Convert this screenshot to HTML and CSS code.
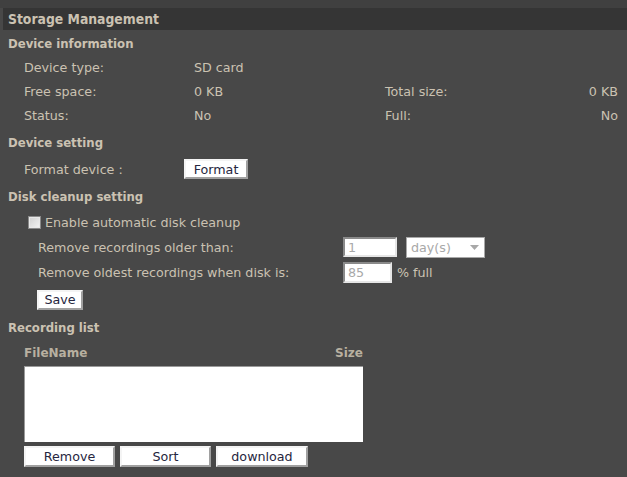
FILE: index.html
```html
<!DOCTYPE html>
<html>
<head>
<meta charset="utf-8">
<link rel="stylesheet" href="styles.css">
</head>
<body>
<div class="strip"></div>
<div class="titlebar">Storage Management</div>

<div class="heading h-first">Device information</div>
<div class="info">
  <div class="info-row">
    <span class="lbl">Device type:</span><span class="val">SD card</span><span></span><span></span>
  </div>
  <div class="info-row">
    <span class="lbl">Free space:</span><span class="val">0 KB</span><span class="lbl2">Total size:</span><span class="val2">0 KB</span>
  </div>
  <div class="info-row">
    <span class="lbl">Status:</span><span class="val">No</span><span class="lbl2">Full:</span><span class="val2">No</span>
  </div>
</div>

<div class="heading h-setting">Device setting</div>
<div class="format-row">
  <span class="lbl">Format device :</span>
  <button class="btn btn-format">Format</button>
</div>

<div class="heading">Disk cleanup setting</div>
<div class="check-row">
  <span class="checkbox"></span><span>Enable automatic disk cleanup</span>
</div>
<div class="clean-row r-older">
  <span class="clean-lbl">Remove recordings older than:</span>
  <div class="ctrls">
    <span class="txt txt-days">1</span>
    <span class="select">day(s)<svg class="arrow" width="9" height="5" viewBox="0 0 9 5"><path d="M0 0H9L4.5 5Z" fill="#a8a8a8"/></svg></span>
  </div>
</div>
<div class="clean-row r-oldest">
  <span class="clean-lbl">Remove oldest recordings when disk is:</span>
  <div class="ctrls">
    <span class="txt txt-pct">85</span>
    <span class="pct">% full</span>
  </div>
</div>
<div class="save-row">
  <button class="btn btn-save">Save</button>
</div>

<div class="heading h-rec">Recording list</div>
<div class="list-head">
  <span>FileName</span><span>Size</span>
</div>
<div class="listbox"></div>
<div class="list-btns">
  <button class="btn btn-list">Remove</button>
  <button class="btn btn-list">Sort</button>
  <button class="btn btn-list btn-dl">download</button>
</div>
</body>
</html>
```

FILE: styles.css
```css
html, body {
  margin: 0;
  padding: 0;
}
body {
  background: #484848;
  color: #cbc2b2;
  font-family: "DejaVu Sans", Verdana, sans-serif;
  font-size: 12.7px;
  width: 627px;
  height: 477px;
  overflow: hidden;
}
.strip {
  height: 8px;
  background: #404040;
}
.titlebar {
  margin-left: 3px;
  height: 22px;
  background: #353535;
  padding-left: 5px;
  font-family: "DejaVu Sans Condensed", "DejaVu Sans", sans-serif;
  font-weight: bold;
  font-size: 13.8px;
  display: flex;
  align-items: center;
}
.heading {
  height: 24px;
  padding-left: 8px;
  font-family: "DejaVu Sans Condensed", "DejaVu Sans", sans-serif;
  font-weight: bold;
  font-size: 13px;
  display: flex;
  align-items: center;
}
.h-first {
  margin-top: 1px;
}
.h-setting {
  margin-top: 3px;
}
.info {
  display: flex;
  flex-direction: column;
}
.info-row {
  height: 24px;
  display: grid;
  grid-template-columns: 170px 191px 1fr auto;
  align-items: center;
  padding-left: 24px;
  padding-right: 9px;
}
.format-row {
  height: 30px;
  display: flex;
  align-items: center;
  padding-left: 24px;
}
.format-row .lbl {
  width: 160px;
}
.btn {
  font-family: "DejaVu Sans", Verdana, sans-serif;
  font-size: 12.7px;
  color: #262640;
  background: #fff;
  border: 2px solid;
  border-color: #f4f4f4 #a0a0a0 #a0a0a0 #f4f4f4;
  padding: 0;
  height: 20px;
  display: inline-flex;
  align-items: center;
  justify-content: center;
}
.btn-format {
  width: 64px;
}
.check-row {
  height: 28px;
  display: flex;
  align-items: center;
  padding-left: 28px;
  gap: 4px;
}
.checkbox {
  width: 11px;
  height: 11px;
  border: 1px solid #8a8a8a;
  background: linear-gradient(135deg, #d0d0d0, #f4f4f4);
  box-shadow: inset 0 0 0 1px #e8e8e8;
}
.clean-row {
  display: grid;
  grid-template-columns: 305px auto;
  align-items: center;
  padding-left: 38px;
}
.r-older {
  height: 22px;
}
.r-oldest {
  height: 28px;
}
.ctrls {
  display: flex;
  align-items: center;
}
.txt {
  box-sizing: border-box;
  background: #fff;
  border: 2px solid;
  border-color: #8a8a8a #e6e6e6 #e6e6e6 #8a8a8a;
  color: #a8a8a8;
  height: 20px;
  padding-left: 3px;
  display: flex;
  align-items: center;
}
.txt-days {
  width: 54px;
}
.txt-pct {
  width: 49px;
  height: 21px;
}
.select {
  box-sizing: border-box;
  margin-left: 9px;
  width: 79px;
  height: 21px;
  background: #fff;
  border: 1px solid #a8a8a8;
  color: #a8a8a8;
  padding-left: 4px;
  padding-right: 5px;
  display: flex;
  align-items: center;
  justify-content: space-between;
}
.pct {
  margin-left: 5px;
}
.save-row {
  height: 27px;
  display: flex;
  align-items: center;
  padding-left: 37px;
}
.btn-save {
  width: 46px;
}
.h-rec {
  height: 28px;
}
.list-head {
  height: 24px;
  width: 339px;
  margin-left: 24px;
  display: flex;
  justify-content: space-between;
  align-items: center;
  font-weight: bold;
  font-size: 12px;
  color: #b8b0a0;
}
.listbox {
  box-sizing: border-box;
  margin-top: 1px;
  margin-left: 24px;
  width: 339px;
  height: 76px;
  background: #fff;
  border-top: 1px solid #9a9a9a;
  border-left: 1px solid #9a9a9a;
}
.list-btns {
  margin-top: 4px;
  margin-left: 24px;
  display: flex;
  gap: 5px;
}
.btn-list {
  width: 91px;
  height: 21px;
}
.btn-dl {
  width: 92px;
}
```
